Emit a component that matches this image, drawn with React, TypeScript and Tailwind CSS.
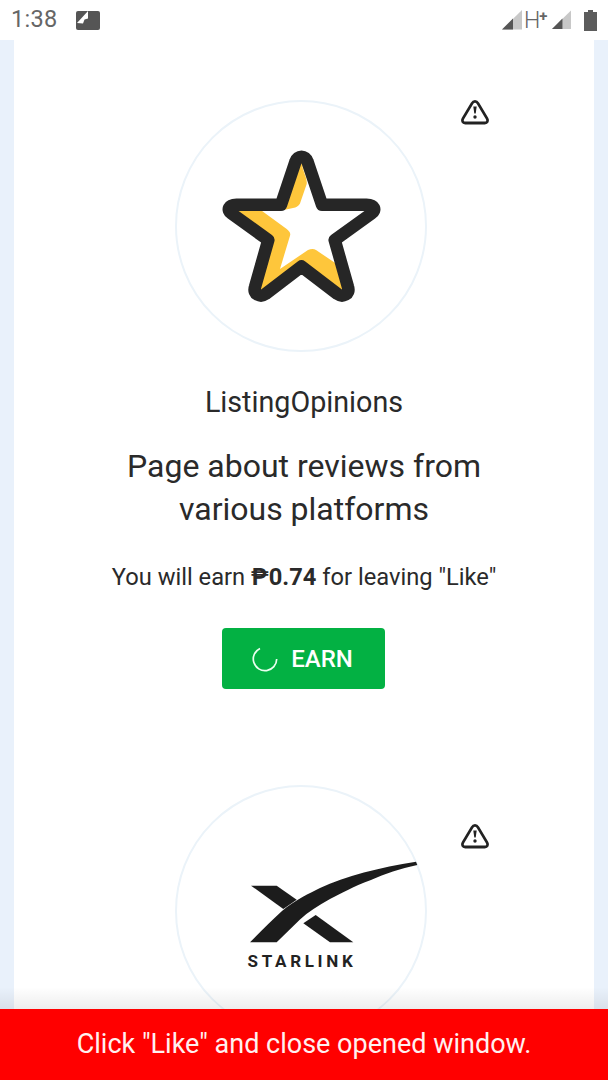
import React from "react";

const font = { fontFamily: "Roboto, 'Noto Sans', sans-serif" };

function Warn({ top }: { top: number }) {
  return (
    <svg viewBox="0 0 30 26" className="absolute w-[30px] h-[26px]" style={{ left: 283, top }} fill="none">
      <path d="M15 2.4 C16.4 2.4 17.3 3.2 18 4.4 L27.1 19.6 C28.4 21.8 27.2 24 24.8 24 L5.2 24 C2.8 24 1.6 21.8 2.9 19.6 L12 4.4 C12.7 3.2 13.6 2.4 15 2.4 Z" stroke="#222" strokeWidth="2.8" strokeLinejoin="round" />
      <path d="M13.3 7.5 L16.7 7.5 L15.7 14.6 L14.3 14.6 Z" fill="#222" />
      <circle cx="15" cy="18" r="1.7" fill="#222" />
    </svg>
  );
}

const starPath =
  "M295.5 162.5 C297.5 156 305.5 156 307.5 162.5 L322 205.7 L366.5 205.7 C374.5 205.7 376.5 211 371.5 214.5 L334.7 241 L348 288 C350.5 295.5 342.5 298.5 337.5 295 L301.5 267.5 L265.5 295 C260.5 298.5 252.5 295.5 255 288 L268.3 241 L231.5 214.5 C226.5 211 228.5 205.7 236.5 205.7 L281 205.7 Z";

function Star() {
  return (
    <svg viewBox="215 145 172 165" className="w-[172px] h-[165px]">
      <path d={starPath} fill="#fec63b" />
      <path
        d="M301.7 165 C303 172 307.5 180 306.7 185 L300.5 203 C299.5 207 296 208.5 293 209 L285 210.7 L261.7 211.7 L286.7 230 C289 232 291 234 290 236.7 L280 270 L308 251 C311 249.5 314 249.5 316 251 L336.7 265 L329.3 241.7 L333.3 236.7 L370 210.7 L318.3 210.7 Z"
        fill="#fff"
      />
      <path d={starPath} fill="none" stroke="#262626" strokeWidth="12.5" strokeLinejoin="round" />
    </svg>
  );
}

function Starlink() {
  return (
    <svg viewBox="240 855 185 92" className="w-[185px] h-[92px] ml-[63px] shrink-0">
      <path d="M250 943.3 C262 931 272 921 282 912 C295 901 310 894 320 889 C345 877 380 868.5 416 862.7 L417.3 866 C400 869.5 385 875 371 881 C352 888 342 894 330 900 C318 907 308 913 300 920.5 L276.7 943.3 Z" fill="#1c1c1c" />
      <path d="M251 886.7 L276.7 886.7 L296.7 900.7 L283.3 910 Z" fill="#1c1c1c" />
      <path d="M303.3 924.3 L315.7 916 L353.3 943.3 L330 943.3 Z" fill="#1c1c1c" />
    </svg>
  );
}

function Listing() {
  return (
    <div className="flex flex-col items-center">
      <div className="relative w-[252px] h-[252px] -ml-[6px] flex items-center justify-center rounded-full border-2 border-[#ebf3f9]">
        <Warn top={-3.5} />
        <Star />
      </div>
      <div className="mt-[33px] text-[28.7px] leading-[34px] text-[#2a2a2a]">ListingOpinions</div>
      <div className="mt-[26px] w-[400px] text-center text-[32px] leading-[43px] text-[#2a2a2a]">
        Page about reviews from various platforms
      </div>
      <div className="mt-[31px] text-[23.7px] leading-[30px] text-[#2a2a2a]">
        You will earn <b className="font-bold">₱0.74</b> for leaving "Like"
      </div>
      <div className="mt-[36px] -ml-[1px] w-[163px] h-[61px] rounded-[4px] bg-[#03b143] flex items-center justify-center gap-[13px] pr-[2px]">
        <svg viewBox="0 0 26 26" className="w-[26px] h-[26px]" fill="none">
          <path d="M8 2.4 A11.7 11.7 0 1 0 24.7 13" stroke="#eafff0" strokeWidth="1.7" />
        </svg>
        <span className="text-[24px] leading-[30px] font-medium text-white">EARN</span>
      </div>
    </div>
  );
}

export default function App() {
  return (
    <div className="relative w-[608px] h-[1080px] overflow-hidden bg-[#e9f1fb]" style={font}>
      <div className="h-[40px] bg-white flex items-center justify-between pl-[11px] pr-[11px]">
        <div className="flex items-center gap-[18px]">
          <span className="text-[23.5px] text-[#666] tracking-[0.3px]">1:38</span>
          <svg viewBox="0 0 24 19" className="w-[24px] h-[19px]">
            <rect width="24" height="19" rx="2" fill="#555" />
            <path d="M1 12 L12 0 L12 7.5 L8.5 8.5 L7 12.5 Z" fill="#fff" />
          </svg>
        </div>
        <div className="flex items-center">
          <svg viewBox="0 0 20 20" className="w-[20px] h-[20px]">
            <path d="M0 19.5 L20 0 L20 19.5 Z" fill="#c8c8c8" />
            <path d="M0 19.5 L11 8.5 L11 19.5 Z" fill="#555" />
          </svg>
          <span className="text-[23px] text-[#666] leading-none ml-[2px] flex items-start w-[22px] font-light">
            H<span className="text-[15px] leading-[14px] font-bold -ml-[1px]">+</span>
          </span>
          <svg viewBox="0 0 20 20" className="w-[19px] h-[20px] ml-[6px]">
            <path d="M0 19.5 L20 0 L20 19.5 Z" fill="#c8c8c8" />
            <path d="M0 19.5 L11 8.5 L11 19.5 Z" fill="#555" />
          </svg>
          <svg viewBox="0 0 13 21" className="w-[13px] h-[21px] ml-[13px]">
            <path d="M4 0 H9 V2 H13 V21 H0 V2 H4 Z" fill="#5c5c5c" />
          </svg>
        </div>
      </div>

      <div className="mx-[14px] h-[1040px] bg-white flex flex-col items-center pt-[60px] gap-[96px]">
        <Listing />
        <div className="flex flex-col items-center">
          <div className="relative w-[252px] h-[252px] -ml-[6px] flex flex-col items-center pt-[67px] rounded-full border-2 border-[#ebf3f9]">
            <Warn top={36.4} />
            <Starlink />
            <span className="mt-[6px] ml-[2px] text-[17px] leading-[18px] font-bold tracking-[3.7px] text-[#222]">STARLINK</span>
          </div>
        </div>
      </div>

      <div className="absolute left-0 right-0 bottom-[71px] h-[22px] bg-gradient-to-b from-transparent to-[#00000012]" />
      <div className="absolute left-0 right-0 bottom-0 h-[71px] bg-[#ff0000] flex items-center justify-center text-[27px] text-[#fff0f0]">
        Click "Like" and close opened window.
      </div>
    </div>
  );
}
